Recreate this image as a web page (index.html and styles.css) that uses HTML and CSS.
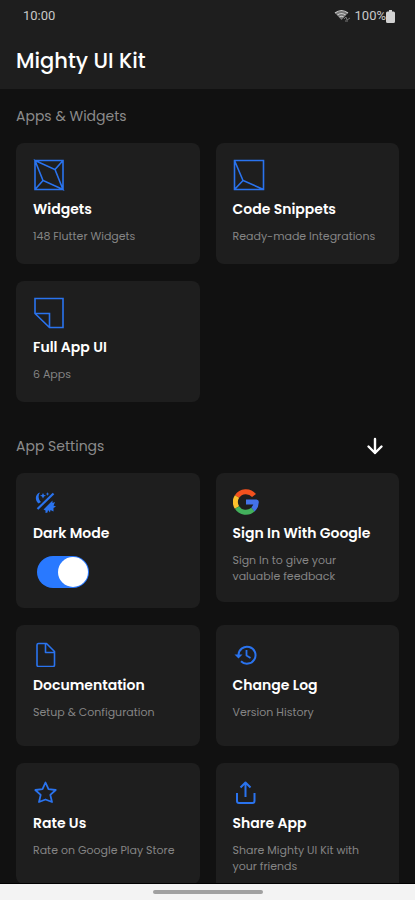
FILE: index.html
```html
<!DOCTYPE html>
<html lang="en">
<head>
<meta charset="utf-8">
<meta name="viewport" content="width=device-width, initial-scale=1">
<title>Mighty UI Kit</title>
<link rel="stylesheet" href="styles.css">
</head>
<body>
<header class="app-header">
  <div class="status">
    <span>10:00</span>
    <span class="status-right">
      <svg class="wifi" width="17" height="14" viewBox="0 0 17 14"><path d="M1 4Q7.500-1 14 4L7.500 11Z" fill="#777"/><path d="M1 4Q7.500-1 14 4M3.500 6Q7.500 3 11.500 6M5.500 8Q7.500 6.500 9.500 8" fill="none" stroke="#ccc" stroke-width="1.200"/><path d="M10 10l2-2 1 3 3-2M11 12h3" fill="none" stroke="#777"/></svg>
      <span>100%</span>
      <svg width="9" height="13" viewBox="0 0 9 13"><path d="M3 0h3v1.500h1.500q1.500 0 1.500 1.500v8.500q0 1.500-1.500 1.500h-6Q0 13 0 11.500V3q0-1.500 1.500-1.500H3Z" fill="#d2d2d2"/></svg>
    </span>
  </div>
  <h1>Mighty UI Kit</h1>
</header>
<main>
  <div class="section-head"><h2>Apps &amp; Widgets</h2></div>
  <div class="cards">
    <a class="card" href="#widgets">
      <svg class="icon large" viewBox="0 0 32 32"><path d="M2 1.500h28v29H2ZM2 1.500L22 10.500 30 30.500 10 21.500ZM30 1.500l-8 9M2 30.500l8-9"/></svg>
      <h3>Widgets</h3><p>148 Flutter Widgets</p>
    </a>
    <a class="card" href="#snippets">
      <svg class="icon large" viewBox="0 0 32 32"><path d="M1.500 1.500h29v29h-29ZM1.500 1.500L10 21.500 30.500 30.500M1.500 30.500l8.500-9"/></svg>
      <h3>Code Snippets</h3><p>Ready-made Integrations</p>
    </a>
    <a class="card" href="#apps">
      <svg class="icon large" viewBox="0 0 32 32"><path d="M2 1.500h28v29H16.500L2 16.500ZM2 16.500h14.500v14"/></svg>
      <h3>Full App UI</h3><p>6 Apps</p>
    </a>
  </div>
  <div class="section-head settings-head">
    <h2>App Settings</h2>
    <button class="scroll-down" type="button" aria-label="Scroll down"><svg width="18" height="18" viewBox="0 0 18 18"><path d="M9 2v14M2.500 9.500L9 16l6.500-6.500"/></svg></button>
  </div>
  <div class="cards">
    <div class="card">
      <svg class="icon" viewBox="0 0 26 26"><path d="M4.500 20L20.500 4.500" stroke-width="2.200"/><path class="solid" d="M7 3.500C2 5 1.500 11 5.500 14.500L8 13C5 10 5 6.500 7 3.500ZM10 4l1 2 2 .5-2 1-1 2-1-2-2-1 2-.5ZM14.500 3l.5 1.500 1.500.5-1.500.5-.5 1.500-.5-1.500-1.500-.5 1.500-.5ZM10.500 20.500L19.500 11.500v2.500l2.500-1-1 2.500-.5 1 2.500 1-2.500 1.500v3.500l-3-1.500-.5 2.500-2-2.500-.5 2.500-2 .5v-2.500Z"/></svg>
      <h3><label for="dark-mode">Dark Mode</label></h3>
      <input class="toggle" id="dark-mode" type="checkbox" checked>
    </div>
    <a class="card" href="#signin">
      <svg class="icon google" viewBox="0 0 26 26"><path d="M21 6.500A10.500 10.500 0 0 0 4 7.500" stroke="#f4511e"/><path d="M4 7.500A10.500 10.500 0 0 0 4 18.500" stroke="#fbc02d"/><path d="M4 18.500A10.500 10.500 0 0 0 20 20.500" stroke="#43b05c"/><path d="M20 20.500Q23 18 23.300 13H13" stroke="#4472e8"/></svg>
      <h3>Sign In With Google</h3><p>Sign In to give your<br>valuable feedback</p>
    </a>
    <a class="card" href="#docs">
      <svg class="icon" viewBox="0 0 26 26"><path d="M5.500 2.500h8L21.500 10.500v13.500q0 1.500-1.500 1.500H5.500q-1.500 0-1.500-1.500V4Q4 2.500 5.500 2.500ZM12.500 3v8.500H21.500"/></svg>
      <h3>Documentation</h3><p>Setup &amp; Configuration</p>
    </a>
    <a class="card" href="#changes">
      <svg class="icon" viewBox="0 0 26 26"><path d="M5.500 14A8.500 8.500 0 1 1 8 20.200" stroke-width="2"/><path d="M13.500 9v5.500l4 2.500" stroke-width="1.800"/><path class="solid" d="M1.500 13.500h8L5.500 17.500Z"/></svg>
      <h3>Change Log</h3><p>Version History</p>
    </a>
    <a class="card" href="#rate">
      <svg class="icon" viewBox="0 0 26 26"><path d="M12.500 3.500l3 6.700 7.200.8-5.400 4.900 1.700 7.100-6.500-2.500-6.500 2.500 1.700-7.100L2.300 11l7.200-.8Z" stroke-width="1.800"/></svg>
      <h3>Rate Us</h3><p>Rate on Google Play Store</p>
    </a>
    <a class="card" href="#share">
      <svg class="icon" viewBox="0 0 26 26"><path d="M12.500 18V4M7.500 8.500l5-5 5 5M4 14v8q0 2 2 2h13.500q2 0 2-2v-8" stroke-width="2"/></svg>
      <h3>Share App</h3><p>Share Mighty UI Kit with<br>your friends</p>
    </a>
  </div>
</main>
<footer class="nav-bar"><span class="nav-handle"></span></footer>
</body>
</html>
```
FILE: styles.css
```css
* { box-sizing: border-box; }
body {
  margin: 0;
  height: 100vh;
  display: flex;
  flex-direction: column;
  overflow: hidden;
  background: #111;
  color: #fff;
  font-family: Poppins, Inter, sans-serif;
}
h1, h2, h3, p { margin: 0; }
.app-header {
  flex: none;
  background: #1e1e1e;
  padding: 8px 16px 12px;
}
.status {
  display: flex;
  justify-content: space-between;
  padding: 0 4px 0 7px;
  color: #c8c8c8;
  font: 13px/16px Roboto, sans-serif;
}
.status-right { display: flex; align-items: center; }
.wifi { margin-right: 4px; }
h1 {
  margin-top: 21px;
  font-size: 21px;
  line-height: 32px;
  font-weight: 500;
}
main { flex: 1; min-height: 0; overflow: hidden; }
.section-head {
  display: flex;
  align-items: center;
  justify-content: space-between;
  height: 54px;
  padding: 0 16px;
}
.settings-head { margin-top: 17px; }
h2 {
  color: #8b8b8b;
  font-size: 14px;
  line-height: 20px;
  font-weight: 400;
}
.scroll-down {
  display: flex;
  margin: 0 15px 0 0;
  border: 0;
  padding: 0;
  background: none;
}
.scroll-down path {
  fill: none;
  stroke: #fff;
  stroke-width: 2.4;
  stroke-linecap: round;
  stroke-linejoin: round;
}
.cards {
  display: grid;
  grid-template-columns: 1fr 1fr;
  gap: 17px 16px;
  padding: 0 16px;
  align-items: start;
}
.card {
  display: block;
  min-height: 121px;
  padding: 16px 16px 18px 17px;
  border-radius: 8px;
  background: #1e1e1e;
  color: #fff;
  text-decoration: none;
}
.icon {
  display: block;
  width: 26px;
  height: 26px;
  fill: none;
  stroke: #2a73ee;
  stroke-width: 1.6;
  stroke-linejoin: round;
}
.icon.large { width: 32px; height: 32px; stroke-linejoin: miter; }
.icon .solid { fill: #2a73ee; stroke: none; }
.icon.google { stroke-width: 5; }
h3 {
  margin-top: 8px;
  font-size: 14px;
  line-height: 21px;
  font-weight: 600;
}
.card p {
  margin-top: 8px;
  color: #858585;
  font-size: 11px;
  line-height: 16px;
}
.toggle {
  appearance: none;
  display: flex;
  justify-content: flex-end;
  width: 52px;
  height: 32px;
  margin: 12px 0 2px 4px;
  border-radius: 16px;
  padding: 1px;
  background: #2979ff;
}
.toggle::before {
  content: "";
  width: 30px;
  height: 30px;
  border-radius: 50%;
  background: #fff;
}
.toggle:not(:checked) { justify-content: flex-start; background: #555; }
.nav-bar {
  flex: none;
  display: flex;
  align-items: center;
  justify-content: center;
  height: 17px;
  border-top: 1px solid #000;
  background: #f3f3f3;
}
.nav-handle {
  width: 110px;
  height: 4px;
  border-radius: 2px;
  background: #a0a0a0;
}
```
